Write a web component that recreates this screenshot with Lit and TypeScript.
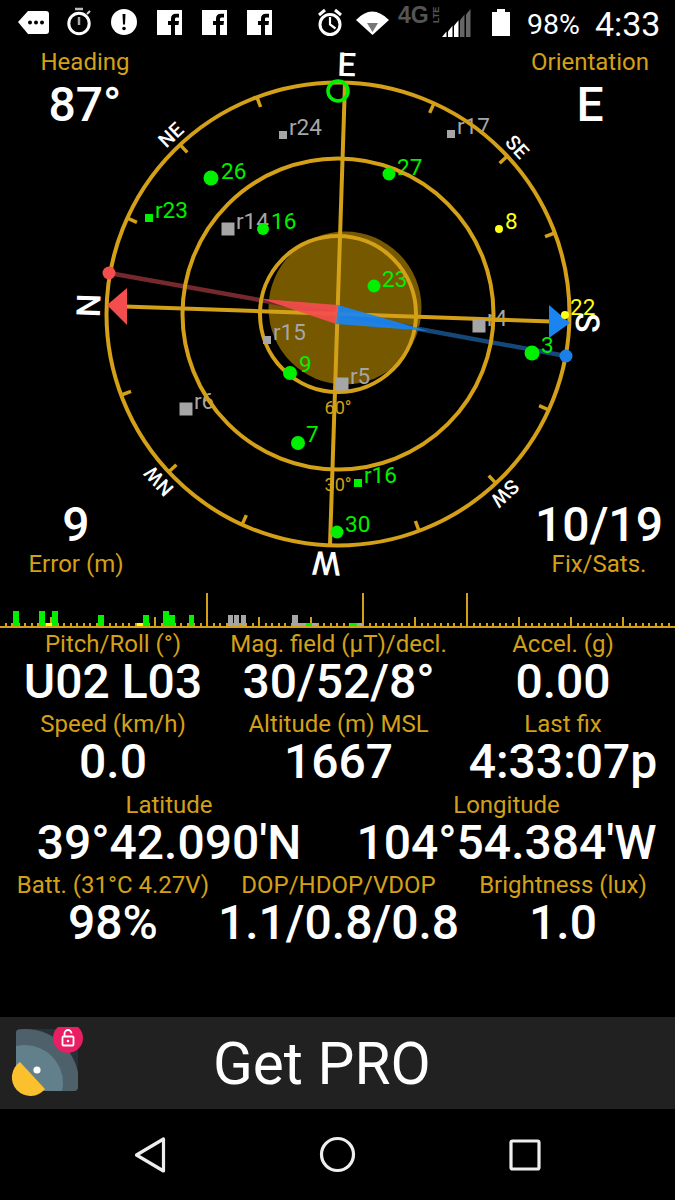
import { LitElement, html, svg, css, unsafeCSS } from 'lit'
import { customElement } from 'lit/decorators.js'

const GOLD = '#d4a017'
const CX = 338
const CY = 314
const ROTATION = -88

type Sat = { kind: 'dot' | 'sq'; x: number; y: number; s: number; c: string; label: string; lx: number; ly: number }

const GREEN = '#00f000'
const GREY = '#a6a6a6'
const YELLOW = '#ffff14'

const sats: Sat[] = [
  { kind: 'dot', x: 211, y: 178, s: 7.5, c: GREEN, label: '26', lx: 221, ly: 179 },
  { kind: 'dot', x: 389, y: 174, s: 6.5, c: GREEN, label: '27', lx: 397, ly: 175 },
  { kind: 'dot', x: 374, y: 286, s: 6.5, c: GREEN, label: '23', lx: 382, ly: 287 },
  { kind: 'dot', x: 263, y: 229, s: 6, c: GREEN, label: '16', lx: 271, ly: 229 },
  { kind: 'dot', x: 499, y: 229, s: 4, c: YELLOW, label: '8', lx: 505, ly: 229 },
  { kind: 'dot', x: 565, y: 315, s: 4, c: YELLOW, label: '22', lx: 570, ly: 315 },
  { kind: 'dot', x: 532, y: 353, s: 7.5, c: GREEN, label: '3', lx: 541, ly: 353 },
  { kind: 'dot', x: 290, y: 373, s: 7, c: GREEN, label: '9', lx: 299, ly: 372 },
  { kind: 'dot', x: 298, y: 443, s: 7, c: GREEN, label: '7', lx: 306, ly: 442 },
  { kind: 'dot', x: 337, y: 532, s: 6.5, c: GREEN, label: '30', lx: 345, ly: 532 },
  { kind: 'sq', x: 283, y: 135, s: 8, c: GREY, label: 'r24', lx: 289, ly: 135 },
  { kind: 'sq', x: 451, y: 134, s: 8, c: GREY, label: 'r17', lx: 457, ly: 134 },
  { kind: 'sq', x: 149, y: 218, s: 8, c: GREEN, label: 'r23', lx: 155, ly: 218 },
  { kind: 'sq', x: 228, y: 229, s: 13, c: GREY, label: 'r14', lx: 236, ly: 229 },
  { kind: 'sq', x: 479, y: 326, s: 13, c: GREY, label: 'r4', lx: 487, ly: 326 },
  { kind: 'sq', x: 267, y: 340, s: 8, c: GREY, label: 'r15', lx: 273, ly: 340 },
  { kind: 'sq', x: 342, y: 384, s: 13, c: GREY, label: 'r5', lx: 350, ly: 384 },
  { kind: 'sq', x: 186, y: 409, s: 13, c: GREY, label: 'r6', lx: 194, ly: 409 },
  { kind: 'sq', x: 358, y: 483, s: 8, c: GREEN, label: 'r16', lx: 364, ly: 483 },
]

const directions = [
  { t: 'N', b: 0, big: true, dx: 0 },
  { t: 'NE', b: 45, big: false, dx: 0 },
  { t: 'E', b: 90, big: true, dx: 0 },
  { t: 'SE', b: 135, big: false, dx: 0 },
  { t: 'S', b: 180, big: true, dx: 0 },
  { t: 'SW', b: 225, big: false, dx: 0 },
  { t: 'W', b: 270, big: true, dx: 3 },
  { t: 'NW', b: 315, big: false, dx: 0 },
]

// x, width, top of each signal bar
const bars: [number, number, number, string][] = [
  [13, 6, 611, GREEN], [39, 6, 611, GREEN], [46, 6, 623, YELLOW], [52, 6, 611, GREEN],
  [98, 6, 615, GREEN], [137, 6, 623, YELLOW], [143, 6, 615, GREEN], [163, 6, 611, GREEN],
  [169, 6, 615, GREEN], [189, 5, 615, GREEN], [228, 5, 615, GREY], [234, 5, 615, GREY],
  [241, 5, 615, GREY], [292, 6, 615, GREY], [298, 8, 623, GREY], [306, 6, 623, GREEN],
  [312, 5, 623, GREY], [350, 7, 623, GREEN], [357, 6, 623, GREY],
]

const stats = [
  [['Pitch/Roll (°)', 'U02 L03'], ['Mag. field (µT)/decl.', '30/52/8°'], ['Accel. (g)', '0.00']],
  [['Speed (km/h)', '0.0'], ['Altitude (m) MSL', '1667'], ['Last fix', '4:33:07p']],
  [['Latitude', "39°42.090'N"], ['Longitude', "104°54.384'W"]],
  [['Batt. (31°C 4.27V)', '98%'], ['DOP/HDOP/VDOP', '1.1/0.8/0.8'], ['Brightness (lux)', '1.0']],
]

@customElement('app-root')
export class AppRoot extends LitElement {
  static styles = css`
    :host {
      display: block;
      width: 675px;
      background: #000;
      color: #fff;
      font-family: Roboto, 'Liberation Sans', sans-serif;
    }

    .page {
      display: flex;
      flex-direction: column;
      height: 1200px;
      background: #000;
    }

    svg {
      display: block;
    }

    .status {
      display: flex;
      align-items: center;
      height: 48px;
      flex: none;
    }

    .notifs {
      display: flex;
      gap: 20px;
      padding-left: 18px;
      width: 317px;
      box-sizing: border-box;
    }

    .notifs svg {
      overflow: visible;
    }

    .pct {
      font-size: 28.5px;
      margin-left: 17px;
    }

    .clock {
      font-size: 34px;
      margin-left: 15px;
    }

    .compass {
      position: relative;
      height: 542px;
      flex: none;
    }

    .dial {
      overflow: visible;
    }

    .corners {
      position: absolute;
      inset: 1px 0 13px;
      display: flex;
      flex-direction: column;
      justify-content: space-between;
    }

    .corner-row {
      display: flex;
      justify-content: space-between;
      align-items: flex-end;
    }

    .corner {
      text-align: center;
    }

    .wide {
      width: 170px;
    }

    .narrow {
      width: 152px;
    }

    .top-value {
      padding-top: 5px;
    }

    .bottom-value {
      margin-bottom: 1px;
    }

    .label {
      color: ${unsafeCSS(GOLD)};
      font-size: 24px;
      line-height: 26px;
      white-space: nowrap;
    }

    .value {
      font-size: 48px;
      font-weight: 500;
      line-height: 50px;
      white-space: nowrap;
    }

    .strip {
      flex: none;
    }

    .stats {
      display: flex;
      flex-direction: column;
    }

    .row {
      display: grid;
      grid-template-columns: 226px 225px 224px;
      height: 80.3px;
      box-sizing: border-box;
      padding-top: 1px;
      text-align: center;
    }

    .row.two {
      grid-template-columns: 338px 337px;
    }

    .cell {
      display: flex;
      flex-direction: column;
      align-items: center;
    }

    .promo {
      display: flex;
      align-items: center;
      height: 92px;
      margin-top: auto;
      background: #212121;
      flex: none;
    }

    .promo svg {
      margin-left: 8px;
    }

    .promo span {
      font-size: 58.5px;
      line-height: 1;
      margin-left: 129px;
      padding-top: 3px;
    }

    .nav {
      height: 91px;
      flex: none;
    }
  `

  private icons() {
    return html`
      <svg width="29" height="48" viewBox="18 0 29 48">
        <path d="M18 22 L28 11 H46 a3 3 0 0 1 3 3 V31 a3 3 0 0 1 -3 3 H28 Z" fill="#fff" />
        <circle cx="30" cy="22.5" r="2" fill="#000" />
        <circle cx="36" cy="22.5" r="2" fill="#000" />
        <circle cx="42" cy="22.5" r="2" fill="#000" />
      </svg>
      <svg width="24" height="48" viewBox="67 0 24 48">
        <circle cx="79" cy="23.5" r="10.2" fill="none" stroke="#fff" stroke-width="3" />
        <path d="M75 9 H83" stroke="#bbb" stroke-width="2.5" />
        <path d="M79 17 V25" stroke="#aaa" stroke-width="2.5" />
        <path d="M87 14 L90 11" stroke="#ddd" stroke-width="2" />
      </svg>
      <svg width="26" height="48" viewBox="111 0 26 48">
        <circle cx="124" cy="22" r="13" fill="#fff" />
        <path d="M122.5 14 H125.5 L125 24.5 H123 Z" fill="#000" />
        <circle cx="124" cy="28.5" r="1.8" fill="#000" />
      </svg>
      ${[0, 1, 2].map(
        () => html`
          <svg width="25" height="48" viewBox="0 0 25 48">
            <path
              d="M0 10 H25 V35 H18 V25 H21.5 L22 21 H18 V19 C18 18 18.6 17.4 19.6 17.4 H22 V13.7 H19 C15.8 13.7 14 15.5 14 18.6 V21 H11 V25 H14 V35 H0 Z"
              fill="#fff"
            />
          </svg>
        `,
      )}
    `
  }

  private systemIcons() {
    const signal = [0, 1, 2, 3, 4].map((i) => {
      const x = 442 + i * 6
      const top = 37 - (i + 1) * 5.6
      return svg`<path d="M${x} ${37 - i * 5.6} L${x + 4.5} ${top} V37 H${x} Z" fill=${i < 3 ? '#fff' : '#666'} />`
    })
    return html`
      <svg width="193" height="48" viewBox="317 0 193 48">
        <circle cx="330" cy="24.5" r="10" fill="none" stroke="#fff" stroke-width="3" />
        <path d="M330 17 V24.5 L335.5 28.5" fill="none" stroke="#fff" stroke-width="2.2" />
        <path d="M319 15 L325 10 M341 15 L335 10" stroke="#fff" stroke-width="3" />
        <path d="M356 20 Q372 3 389 20 L372.5 35 Z" fill="#fff" />
        <path d="M367 23 H378 L372.5 32 Z" fill="#777" />
        <text x="398" y="23" font-family="Liberation Sans" font-weight="700" font-size="23" fill="#555">4G</text>
        <text transform="translate(439 23) rotate(-90)" font-family="Liberation Sans" font-size="9" font-weight="700" fill="#555">LTE</text>
        ${signal}
        <path d="M497 9 H505 V12 H510 V36 H492 V12 H497 Z" fill="#fff" />
      </svg>
    `
  }

  private dial() {
    const ticks = Array.from({ length: 16 }, (_, i) => i * 22.5).filter((b) => b % 90 !== 0)
    return html`
      <svg class="dial" width="675" height="542" viewBox="0 48 675 542">
        <circle cx="345" cy="308" r="76.5" fill="#755800" />
        <path d="M${CX} ${CY} L109 273" stroke="#75292c" stroke-width="4.5" />
        <path d="M${CX} ${CY} L566 356" stroke="#154878" stroke-width="4.5" />

        ${sats.map(
          (s) => svg`<text x=${s.lx} y=${s.ly} font-size="22.5" fill=${s.c}>${s.label}</text>`,
        )}

        <g fill="none" stroke=${GOLD} stroke-width="4">
          <circle cx=${CX} cy=${CY} r="231.5" />
          <circle cx=${CX} cy=${CY} r="155.5" />
          <circle cx=${CX} cy=${CY} r="78" />
          <path d="M345 83 L330 545" />
          <path d="M110 306 L566 322" />
        </g>

        <g transform="rotate(${ROTATION} ${CX} ${CY})">
          ${ticks.map(
            (b) => svg`<path transform="rotate(${b} ${CX} ${CY})" d="M${CX} ${CY - 232} V${CY - 221}" stroke=${GOLD} stroke-width="3.5" />`,
          )}
          ${directions.map(
            (d) => svg`<text transform="rotate(${d.b} ${CX} ${CY})" x=${CX + d.dx} y=${CY - 238} text-anchor="middle" font-size=${d.big ? 33 : 20} font-weight="500" fill="#fff">${d.t}</text>`,
          )}
        </g>

        <text x=${CX} y="414" text-anchor="middle" font-size="18" fill=${GOLD}>60°</text>
        <text x=${CX} y="491" text-anchor="middle" font-size="18" fill=${GOLD}>30°</text>

        <path d="M338 305 L336 324 L262 299 Z" fill="#f44d4d" fill-opacity="0.92" />
        <path d="M338 305 L336 324 L428 331 Z" fill="#1a84f0" fill-opacity="0.92" />
        <path d="M107 305 L127 288 V325 Z" fill="#f44d4d" />
        <path d="M570 323 L549 305 V338 Z" fill="#1a84f0" />
        <circle cx="109" cy="273" r="6.5" fill="#f44d4d" />
        <circle cx="566" cy="356" r="6.5" fill="#1a80e8" />
        <circle cx="338" cy="91" r="10" fill="none" stroke="#00f000" stroke-width="3.5" />

        ${sats.map((s) =>
          s.kind === 'dot'
            ? svg`<circle cx=${s.x} cy=${s.y} r=${s.s} fill=${s.c} />`
            : svg`<rect x=${s.x - s.s / 2} y=${s.y - s.s / 2} width=${s.s} height=${s.s} fill=${s.c} />`,
        )}
      </svg>
    `
  }

  private strip() {
    const long = [32, 56, 72]
    const ticks = []
    for (let i = 1; i * 6.5 - 1 < 675; i++) {
      const x = Math.round(i * 6.5 - 1)
      let top = 623
      if (i % 8 === 0) top = 617
      if (long.includes(i)) top = 593
      ticks.push(svg`<path d="M${x} ${top} V627" stroke=${GOLD} stroke-width="2" />`)
    }
    return html`
      <svg class="strip" width="675" height="40" viewBox="0 590 675 40">
        ${ticks}
        ${bars.map(([x, w, top, c]) => svg`<rect x=${x} y=${top} width=${w} height=${627 - top} fill=${c} />`)}
        <path d="M0 627 H675" stroke=${GOLD} stroke-width="2" />
      </svg>
    `
  }

  private promoIcon() {
    return html`
      <svg width="76" height="72" viewBox="8 1030 76 72">
        <defs>
          <clipPath id="tile"><rect x="16" y="1032" width="62" height="62" rx="4" /></clipPath>
        </defs>
        <g clip-path="url(#tile)">
          <rect x="16" y="1032" width="62" height="62" fill="#263238" />
          <circle cx="25" cy="1086" r="54" fill="#4e616b" />
          <circle cx="25" cy="1086" r="38" fill="#627f8c" />
        </g>
        <path d="M20 1065 A18.6 18.6 0 1 0 45 1092 Z" fill="#fbc02d" />
        <circle cx="37" cy="1073" r="3.6" fill="#fff" />
        <circle cx="68" cy="1041" r="15" fill="#e91e63" />
        <rect x="62.5" y="1039.5" width="11" height="9" rx="1" fill="none" stroke="#fff" stroke-width="1.8" />
        <path d="M64.5 1039.5 V1036.5 a3.5 3.5 0 0 1 7 0" fill="none" stroke="#fff" stroke-width="1.8" />
        <circle cx="68" cy="1044" r="1.3" fill="#fff" />
      </svg>
    `
  }

  render() {
    return html`
      <div class="page">
        <div class="status">
          <div class="notifs">${this.icons()}</div>
          ${this.systemIcons()}
          <span class="pct">98%</span>
          <span class="clock">4:33</span>
        </div>

        <div class="compass">
          ${this.dial()}
          <div class="corners">
            <div class="corner-row">
              <div class="corner wide">
                <div class="label">Heading</div>
                <div class="value top-value">87°</div>
              </div>
              <div class="corner wide">
                <div class="label">Orientation</div>
                <div class="value top-value">E</div>
              </div>
            </div>
            <div class="corner-row">
              <div class="corner narrow">
                <div class="value bottom-value">9</div>
                <div class="label">Error (m)</div>
              </div>
              <div class="corner narrow">
                <div class="value bottom-value">10/19</div>
                <div class="label">Fix/Sats.</div>
              </div>
            </div>
          </div>
        </div>

        ${this.strip()}

        <div class="stats">
          ${stats.map(
            (row) => html`
              <div class="row ${row.length === 2 ? 'two' : ''}">
                ${row.map(
                  ([label, value]) => html`
                    <div class="cell">
                      <div class="label">${label}</div>
                      <div class="value">${value}</div>
                    </div>
                  `,
                )}
              </div>
            `,
          )}
        </div>

        <div class="promo">
          ${this.promoIcon()}
          <span>Get PRO</span>
        </div>

        <svg class="nav" width="675" height="91" viewBox="0 1109 675 91">
          <path d="M136.5 1155 L163.5 1139 V1171 Z" fill="none" stroke="#eee" stroke-width="3.2" stroke-linejoin="round" />
          <circle cx="337.5" cy="1154.5" r="16" fill="none" stroke="#eee" stroke-width="3.2" />
          <rect x="511" y="1141" width="28" height="28" rx="1.5" fill="none" stroke="#eee" stroke-width="3.2" />
        </svg>
      </div>
    `
  }
}
